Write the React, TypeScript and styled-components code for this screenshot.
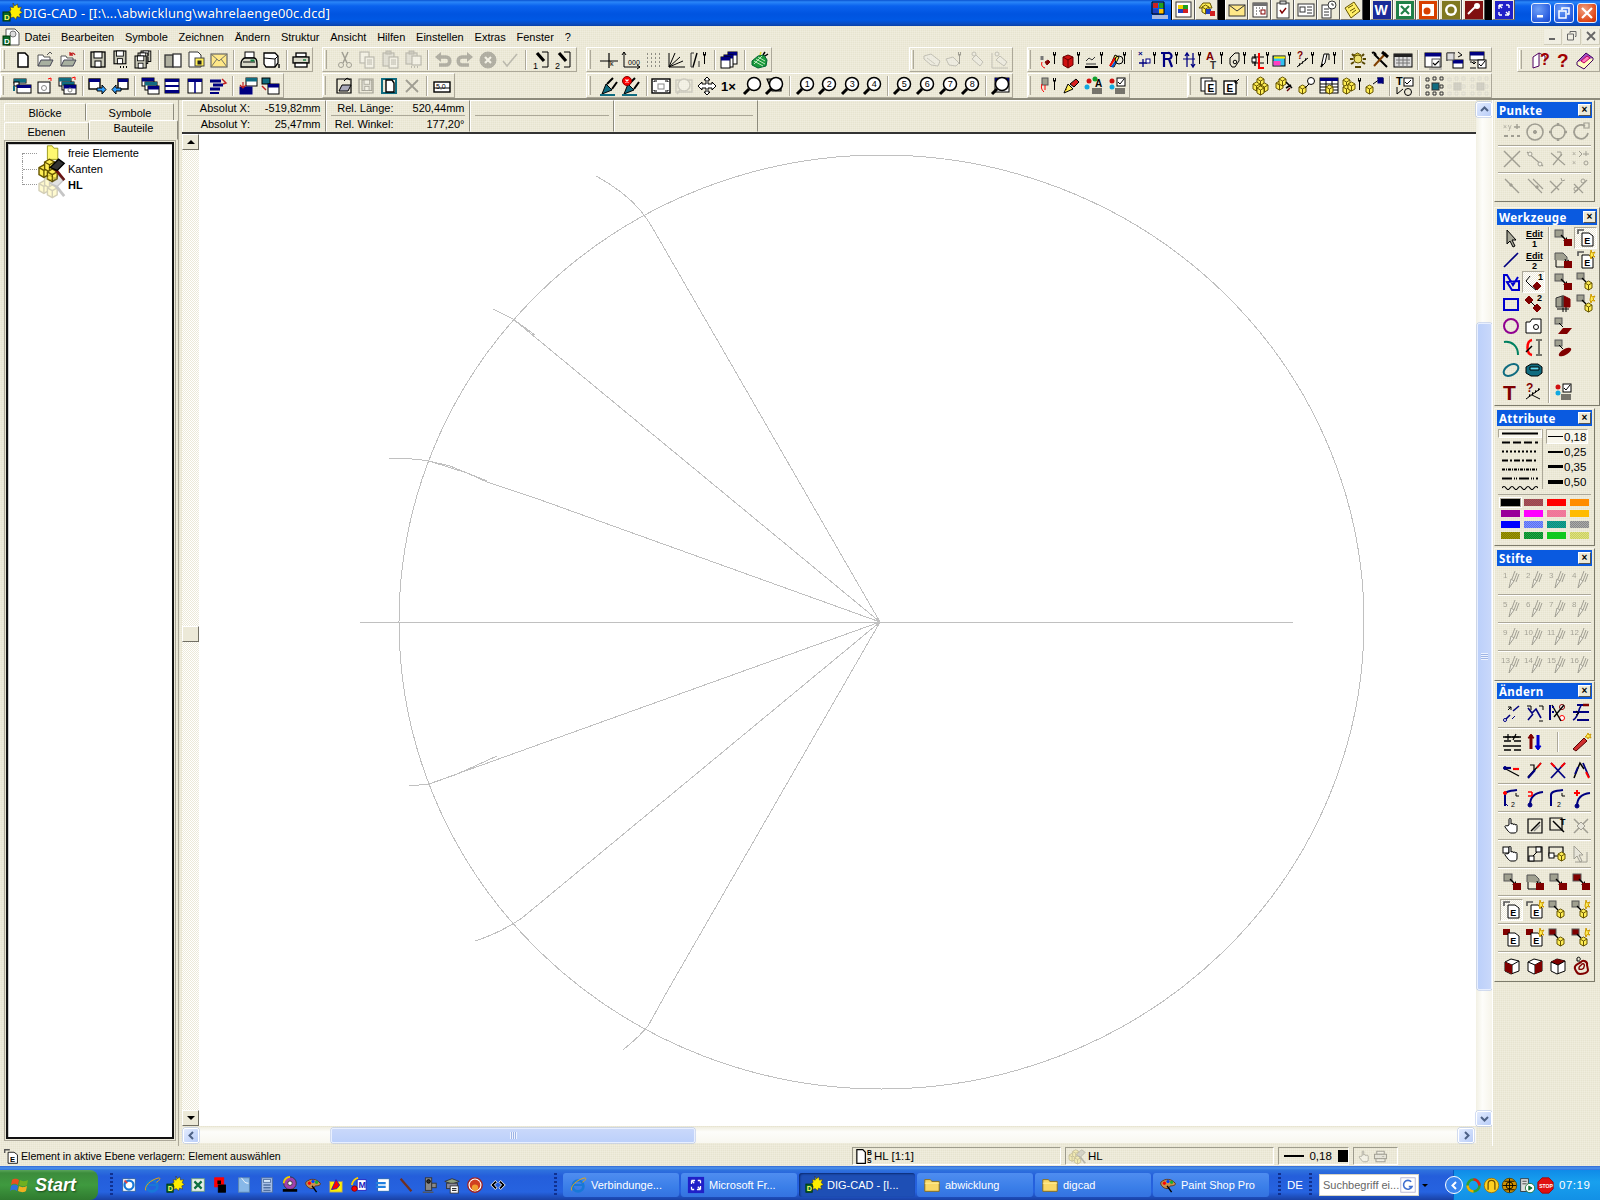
import React from "react";
import styled, { createGlobalStyle, css } from "styled-components";

const Global = createGlobalStyle`
  html, body { margin: 0; padding: 0; background: #ece9d8; overflow: hidden; }
  * { box-sizing: border-box; }
`;

const FONT = `"Liberation Sans", Arial, sans-serif`;
const dither = css`
  background-color: #ece9d8;
  background-image: conic-gradient(#e7e4d0 25%, transparent 0 50%, #f0edde 0 75%, transparent 0);
  background-size: 2px 2px;
`;

/* ---------- icon primitives ---------- */
const Y = "#ffee55", N = "#000080", R = "#ff0000", M = "#800000", B = "#0000d0", T = "#106c80", GR = "#a0a090";
const p = (d: string, s = "#000", f = "none", w = 1) => <path d={d} stroke={s} fill={f} strokeWidth={w} />;
const r = (x: number, y: number, w: number, h: number, f = "#fff", s = "#000", sw = 1) => (
  <rect x={x} y={y} width={w} height={h} fill={f} stroke={s} strokeWidth={sw} />
);
const c = (x: number, y: number, rad: number, f = "none", s = "#000", w = 1) => (
  <circle cx={x} cy={y} r={rad} fill={f} stroke={s} strokeWidth={w} />
);
const t = (v: string, x: number, y: number, size = 8, fill = "#000", bold = false) => (
  <text x={x} y={y} fontSize={size} fill={fill} fontWeight={bold ? 700 : 400} fontFamily="'Liberation Sans',sans-serif">{v}</text>
);
const wr = (dx = 0) => (
  <g transform={`translate(${dx} 0)`}>
    <path d="M14 2h1v2h1V2h1v3l-1 1v8h-1V6l-1-1z" fill="#000" />
  </g>
);
const cb = (x: number, y: number, f = Y, s = "#665500") => (
  <g transform={`translate(${x} ${y})`}>
    {p("M0 2 3.5 0 7 2V7L3.5 9 0 7z", s, f)}
    {p("M0 2 3.5 4 7 2M3.5 4V9", s)}
  </g>
);
const cubes = () => (<>{cb(6, 1)}{cb(2, 6)}{cb(10, 7)}{cb(6, 10)}</>);
const win = (x: number, y: number, w: number, h: number, bar = N) => (
  <g>{r(x, y, w, h, "#fff", "#000")}<rect x={x} y={y} width={w} height={3.5} fill={bar} /></g>
);
const mv = (from = GR, to = M) => (
  <>
    <rect x={2} y={2} width={8} height={7} fill={from} stroke="#555" />
    {p("M8 7 13 12", "#000", "none", 1.4)}{p("M10.5 12.5h3v-3", "#000")}
    <rect x={11} y={11} width={8} height={7} fill={to} />
  </>
);
const eDoc = (from = "none", star = false) => (
  <>
    {from === "none"
      ? p("M2 6V2h6", "#555", "none", 1.6)
      : <rect x={1} y={1} width={7} height={6} fill={from} />}
    {p("M6 5h7l4 3v10H6z", "#000", "#fff")}
    {t("E", 8.2, 16, 9, "#000", true)}
    {star && p("M15 0l1 3 3-1-2 3 2 2-3-.5-1 2.5-1-3z", "#cc9900", Y)}
  </>
);
const cubeMv = (from = GR, star = false) => (
  <>
    <rect x={1} y={1} width={7} height={6} fill={from} stroke="#555" />
    {p("M6 6l4 4", "#000", "none", 1.3)}
    {cb(9, 9)}
    {star && p("M15 0l1 3 3-1-2 3 2 2-3-.5-1 2.5-1-3z", "#cc9900", Y)}
  </>
);
const floppy = (x: number, y: number, s: number) => (
  <g transform={`translate(${x} ${y}) scale(${s})`}>
    {r(0, 0, 14, 15, "#c8c8b8", "#000", 1.3)}{r(3, 0, 8, 6, "#fff", "#000")}{r(4, 9, 6, 6, "#fff", "#000")}
  </g>
);
const hand = () => (
  <>
    {p("M7 9V3.5a1 1 0 0 1 2 0V8l1-.5c1 0 1 .5 1 1l1-.5c1 0 1 .5 1 1l1-.5c1 0 1 .5 1 1.5v4c0 2-1 3-3 3H9c-1 0-2-1-3-2l-3-4c-.5-1 1-2 2-1z", "#000", "#fff")}
  </>
);
const mag = (n?: string) => (
  <>
    {p("M7 13 2 18", "#000", "none", 3)}
    {c(12, 8, 6.5, "#fff", "#000", 1.5)}
    {n && t(n, 9.7, 11.3, 9)}
  </>
);
const logo = () => (
  <>
    {p("M11 0l1.5 3 3-2 .5 3.5 3.5-.5-1.5 3.5 2.5 2-3 1.5 1 3.5-3.5-1-1 3-2.5-2.5-3 1 .5-4-3-2 3-2-1-3 3.5.5z", "#333", "#ffee00", 0.6)}
    {r(1, 9, 7, 9, "#0a6a2a", "#003300")}
    {t("D", 2, 17, 8, "#ffff66", true)}
  </>
);
const folder = () => (
  <>
    {p("M2 6V4h6l2 2h8v11H2z", "#8a6a10", "#f8d868")}
    {p("M2 8h16", "#fff0a0")}
  </>
);
const pal = () => (
  <>
    {p("M2 7c5-5 12-4 16 1 1 2-2 3-5 3-2 0-1 3-4 3C5 14 1 10 2 7z", "#5a3010", "#c89050")}
    {c(6, 8, 1.4, R, R)}{c(10, 6, 1.4, "#0040ff", "#0040ff")}{c(14, 7, 1.4, "#10b030", "#10b030")}
    {p("M9 11l5 7", "#000", "none", 1.6)}
  </>
);
const ie = () => (
  <>
    {c(10, 11, 6, "none", "#1878d8", 3)}
    {p("M5 10h10", "#1878d8", "none", 2.4)}
    {p("M3 16C1 12 8 4 18 2 20 3 17 6 15 7", "#f0a800", "none", 1)}
  </>
);
const fp = () => (
  <>
    <rect x={1} y={1} width={18} height={18} fill="#2020c8" />
    {p("M5 5l3 3M5 5v4M5 5h4M15 15l-3-3M15 15v-4M15 15h-4M15 5h-3M15 5v3M5 15h3M5 15v-3", "#fff", "none", 1.4)}
  </>
);
const dashed = () => p("M3 3h14v14H3z", "#000", "none", 1.2);

const ICONS: Record<string, React.ReactNode> = {
  doc: (<>{p("M3 2h9l4 4v12H3z", "#555", "#fff")}{c(10, 7, 3, "#ddd", "#777")}{r(0, 9, 7, 9, "#0a6a2a", "#003300")}{t("D", 1, 17, 8, "#fff", true)}</>),
  logo: logo(), folder: folder(), pal: pal(), ie: ie(), fp: fp(),
  new: p("M5 3h7l3 3v11H5z", "#000", "#fff", 1.5),
  docbs: (<>{p("M1 2h7l3 3v13H1z", "#000", "#fff", 1.4)}{t("B", 13, 8, 8, "#000", true)}{t("S", 13, 18, 8, "#000", true)}</>),
  open: (<>{p("M3 16V5h5l1 2h6v3", "#555", "#fff")}{p("M3 16 6 10h12l-3 6z", "#445", "#a8b0a0")}{p("M12 5l3-3 2 2", "#555")}</>),
  openr: (<>{p("M3 16V6h5l1 2h6v2", "#555", "#fff")}{p("M3 16 6 10h12l-3 6z", "#445", "#a8b0a0")}{p("M12 5c2-3 4-2 5 0M12 2v3h3", "#c02020", "none", 1.3)}</>),
  save: floppy(3, 2, 1),
  savem: (<>{floppy(3, 1, .85)}{p("M9 17h1M12 17h1M15 17h1", "#000", "none", 2)}</>),
  saveall: (<>{floppy(8, 1, .7)}{floppy(5, 3, .7)}{floppy(2, 6, .8)}</>),
  book: (<>{r(2, 5, 8, 12, "#b0b0a0", "#333", 1.3)}{r(10, 4, 8, 13, "#fff", "#333", 1.3)}</>),
  ydoc: (<>{p("M3 2h9l3 3v12H3z", "#333", "#fff")}{r(9, 8, 9, 8, Y, "#444")}{r(12, 11, 3, 3, "#222", "#222")}</>),
  mail: (<>{r(2, 4, 16, 13, "#ffe888", "#666", 1.2)}{p("M2 4l8 7 8-7M2 17l6-8M18 17l-6-8", "#776")}</>),
  print: (<>{r(6, 2, 9, 6, "#fff")}{p("M2 14c0-3 2-6 4-6h9c2 0 3 3 3 6v3H2z", "#000", "#d8d8c8", 1.3)}{p("M4 12h12", "#000")}{r(12, 10, 3, 1, "#108040", "#108040")}</>),
  plot: (<>{p("M3 3h11l3 3v7l-3 4H5l-2-3z", "#000", "#fff", 1.3)}{p("M3 8l11 1 3-3M14 9v8", "#000")}{p("M18 14v4", "#000", "none", 1.4)}</>),
  print2: (<>{r(5, 3, 10, 4, "#fff", "#000", 1.3)}{r(2, 7, 16, 6, "#d8d8c8", "#000", 1.3)}{r(4, 13, 12, 4, "#fff", "#000", 1.3)}{p("M12 10h3", "#108040", "none", 1.4)}</>),
  cut: (<>{p("M7 2l5 11M13 2 8 13", "#000", "none", 1.5)}{c(6, 15, 2.5)}{c(14, 15, 2.5)}</>),
  copy: (<>{r(3, 2, 9, 11, "#fff", "#555", 1.2)}{r(8, 7, 9, 11, "#fff", "#555", 1.2)}{p("M10 10h5M10 12h5M10 14h5", "#555")}</>),
  paste: (<>{r(3, 3, 11, 13, "#ccb", "#555", 1.2)}{r(6, 1, 5, 3, "#888", "#555")}{r(9, 7, 9, 11, "#fff", "#555", 1.2)}{p("M11 10h5M11 12h5M11 14h5", "#555")}</>),
  pastem: (<>{r(3, 3, 11, 11, "#ccb", "#555", 1.2)}{r(6, 1, 5, 3, "#888", "#555")}{r(9, 6, 9, 9, "#fff", "#555", 1.2)}{p("M8 17h1M11 17h1M14 17h1", "#555", "none", 2)}</>),
  undo: (<>{p("M7 7h6c5 0 5 8 0 8H6", "#333", "none", 3.6)}<path d="M8 2 2 7l6 5z" fill="#333" /></>),
  redo: (<>{p("M13 7H7c-5 0-5 8 0 8h7", "#333", "none", 3.6)}<path d="M12 2l6 5-6 5z" fill="#333" /></>),
  cancel: (<>{c(10, 10, 8, "#333", "#333")}{p("M7 7l6 6M13 7l-6 6", "#fff", "none", 2.2)}</>),
  check: p("M3 11l4 5L17 4", "#555", "none", 1.6),
  pin1: (<>{p("M11 2h6v15h-6", "#000")}{p("M6 3l7 8", "#000", "none", 3.2)}{t("1", 2, 19, 9)}</>),
  pin2: (<>{p("M11 2h6v15h-6", "#000")}{p("M6 3l7 8", "#000", "none", 3.2)}{t("2", 2, 19, 9)}</>),
  snap: (<>{p("M1 11h18M10 3v15", "#000", "none", 1.2)}{t("k", 11, 16, 7)}</>),
  axes: (<>{p("M3 2v15h16M3 2 1 5M3 2l2 3M19 17l-3-2M19 17l-3 2", "#000")}{t("0", 7, 15, 7)}{t("0", 11, 15, 7)}{t("0", 15, 15, 7)}</>),
  grid: (<path d="M3 4h1M7 4h1M11 4h1M15 4h1M3 8h1M7 8h1M11 8h1M15 8h1M3 12h1M7 12h1M11 12h1M15 12h1M3 16h1M7 16h1M11 16h1M15 16h1" stroke="#333" />),
  rays: p("M2 17h16M2 17l14-6M2 17l11-10M2 17l6-14M2 3v14", "#000"),
  slash: (<>{p("M8 3 4 17", "#000", "none", 1.4)}{p("M2 3v14M2 3h3M2 17h3M10 11v6", "#333")}{wr(0)}</>),
  wins: (<>{win(9, 2, 9, 12)}{win(5, 5, 9, 12)}{win(2, 7, 9, 11)}</>),
  bug: (<>{p("M3 11 9 6l6-1 3 5-1 6-8 2-6-3z", "#063", "#1a9a3a")}{p("M5 11l9 5M7 9l9 5M9 7l7 4M5 14l8-8", "#bfe8c0")}{p("M14 5l2-3M16 6l3-2", "#000", "none", 1.4)}{p("M11 5l1-3", "#dd2", "none", 1.4)}</>),
  h1: (<>{p("M2 6l7-2 9 7-2 5-7-1-7-6z", "#666", "#eee")}{p("M5 8l8 6", "#888")}</>),
  h2: (<>{p("M2 9l7-2 6 6-3 3-7-1z", "#666", "#eee")}{wr(0)}</>),
  h3: (<>{p("M5 9 9 5l7 7-3 4z", "#666", "#eee")}{c(7, 4, 2, "#eee", "#666")}</>),
  h4: (<>{p("M2 3v15h16", "#666")}{p("M6 10 10 6l7 6-3 4z", "#666", "#eee")}{c(7, 4, 2, "#eee", "#666")}</>),
  w1: (<>{p("M3 6v4", "#777", "none", 3)}{p("M6 12l3-2 2 2-3 3z", "#800000", M)}{p("M3 12c-1 3 0 5 3 6", R)}{wr(0)}</>),
  w2: (<>{p("M2 7l5-2 5 2v8l-5 3-5-3z", "#600", "#d01010")}{p("M2 7l5 3 5-3M7 10v8", "#600")}{wr(2)}</>),
  w3: (<>{p("M2 11l3-3 3 2 3-3M2 14h10", "#333")}{p("M1 17h13", "#000", "none", 2)}{wr(2)}</>),
  w4: (<>{p("M3 16 8 5l4 2-5 10z", "#000", Y)}{p("M3 16 8 8", R, "none", 2)}{p("M5 17l4-6", "#0050e0", "none", 2)}{c(12, 10, 4, "none", "#000")}{wr(2)}</>),
  w5: (<>{t("×", 1, 6, 8, N, true)}{p("M6 9v8M2 13h8", N, "none", 1.3)}{r(9, 9, 4, 4, "#fff", N)}{wr(2)}</>),
  w6: (<>{p("M2 3h7a3 3 0 0 1 1 6l3 8M5 3v14M5 9h5", N, "none", 2.2)}{wr(2)}</>),
  w7: (<>{p("M5 3v14M3 6l2-3 2 3M11 3v14M9 14l2 3 2-3", N, "none", 1.3)}{p("M1 9h12", N)}{wr(2)}</>),
  w8: (<>{t("A", 2, 10, 11, M, true)}{t("T", 6, 19, 10, "#333", true)}{wr(2)}</>),
  w9: (<>{p("M3 8 8 3h4v8l-4 6H5l-2-3z", "#000")}{c(8, 12, 1.8)}{wr(2)}</>),
  w10: (<>{p("M2 7h12M2 13h12", "#000")}{p("M5 4v12", "#000", "none", 1.4)}{r(2, 8, 4, 4, "#fff")}{p("M9 3v15h5", R, "none", 2)}{wr(2)}</>),
  w11: (<>{r(1, 6, 12, 10, "#30c0f0", "#000")}<rect x={1.5} y={11} width={7} height={4.5} fill="#ff40c0" /><rect x={2} y={6.5} width={11} height={2} fill="#ffee00" />{wr(2)}</>),
  w12: (<>{t("?", 2, 9, 10, M, true)}{p("M2 17 13 8", "#000")}{p("M4 16l1-3M7 14l1-3M10 11l1-3", "#000")}{wr(2)}</>),
  w13: (<>{p("M4 17 7 4h3l-2 9z", "#000", "#fff")}{p("M10 4h2v6", "#000")}{p("M6 14l-2 3", "#000", "none", 1.6)}{wr(2)}</>),
  gear: (<>{cb(6, 3, "#e0d040")}{p("M2 9h3M15 9h3M4 4l2 2M16 4l-2 2M3 14l3-2M17 14l-3-2M7 17h6", "#554400", "none", 2)}{c(10, 9, 4, "#ece070", "#665500")}</>),
  tools: (<>{p("M4 4l13 13", "#000", "none", 2)}{p("M16 3 4 16", "#804000", "none", 2)}{p("M12 2l6 5", "#000", "none", 3)}{p("M2 3c2-1 3 0 4 2", "#000", "none", 2)}</>),
  bar: (<>{r(1, 4, 18, 13, "#ddd")}<rect x={1} y={4} width={18} height={3} fill="#222" />{p("M3 10h14M3 13h14M6 7v10M10 7v10M14 7v10", "#777")}</>),
  wc: (<>{win(2, 3, 16, 14)}{r(9, 9, 8, 8, "#fff", "#555")}{p("M10 13l2 2 4-4", "#000", "none", 1.1)}{p("M6 19h13", "#999", "none", 1)}</>),
  wx: (<>{p("M2 3h8M2 3v8", "#000")}{p("M5 7l3 3M13 2l4 3-4 2", "#000")}{win(8, 10, 10, 8)}{r(2, 3, 7, 7, "#ddd", "#555")}</>),
  wy: (<>{win(2, 2, 14, 8)}{p("M4 12l2 2 2-2M6 14v-3", "#000")}{r(10, 10, 8, 8, "#fff")}{p("M11 14l2 2 4-5", "#000")}{p("M2 12h2M2 18h6", "#000")}</>),
  helpq: (<>{p("M3 7l6-4v13l-6 2zM9 3l6 3v5", "#500060", "#fff")}{t("?", 10, 15, 16, "#a00000", true)}</>),
  help: t("?", 5, 17, 19, "#a00000", true),
  bookp: (<>{p("M2 12 11 3l7 5-9 9z", "#400060", "#a050c0")}{p("M2 12v3l7 4 9-9V8", "#400060", "#ffffc0")}{p("M6 11l6-5 3 2-6 5z", "#c00060", "#ff80c0")}</>),
  pg1: (<>{win(2, 3, 12, 4, T)}{r(2, 6, 5, 4, "#fff", "#000")}{r(5, 9, 14, 8, "#fff")}<rect x={5} y={9} width={14} height={3} fill={N} />{p("M2 10v5", T, "none", 2)}</>),
  pg2: (<>{r(4, 6, 12, 11, "#fff")}{c(10, 12, 2.5, "none", "#888")}{p("M14 3l3-1M17 2v3", R)}</>),
  pg3: (<>{win(2, 2, 12, 8, T)}{win(5, 6, 12, 8, T)}{win(7, 9, 12, 9)}{c(13, 14, 2, "none", "#888")}{p("M15 2l3-1M18 1v3", R)}</>),
  ar1: (<>{r(2, 3, 11, 10, "#fff", "#000", 1.4)}<rect x={2} y={3} width={11} height={3} fill={N} />{p("M10 12h5V9l4 4.5-4 4.5v-3h-5z", "#000", "#30a0ff")}</>),
  ar2: (<>{r(8, 3, 10, 10, "#fff", "#000", 1.4)}<rect x={8} y={3} width={10} height={3} fill={N} />{p("M11 12H6V9l-4 4.5 4 4.5v-3h5z", "#000", "#30a0ff")}</>),
  st: (<>{win(2, 2, 12, 8)}{win(5, 6, 12, 8, T)}{win(8, 10, 11, 8)}</>),
  hs: (<>{r(3, 3, 14, 14)}<rect x={3} y={3} width={14} height={3} fill={N} /><rect x={3} y={9} width={14} height={2} fill={N} /><rect x={3} y={14} width={14} height={3} fill={N} /></>),
  vs: (<>{r(3, 3, 14, 14)}<rect x={3} y={3} width={14} height={3} fill={N} />{p("M10 3v14", N, "none", 1.6)}</>),
  lst: (<>{p("M2 5h11M5 9h10M2 13h10", N, "none", 3)}{p("M2 17h9", N, "none", 2)}{p("M14 3l4 4-3 1", "#c02020", "none", 1.4)}</>),
  li1: (<>{win(8, 2, 11, 8, T)}{r(2, 11, 12, 7, N, N)}{p("M2 9l3 3 3-3M5 12V6", "#c02020", "none", 1.2)}</>),
  li2: (<>{r(2, 2, 8, 6, T, "#000")}{p("M2 10l4 4", "#c02020", "none", 1.4)}{win(8, 8, 11, 10)}</>),
  dopen: (<>{dashed()}{p("M5 15 8 9h9l-3 6z", "#000", "#aab")}{p("M10 5l3-3 3 2", "#000")}</>),
  dsave: (<>{dashed()}{floppy(6, 4, .7)}</>),
  dsel: (<>{p("M3 3h14v14H3z", T, "none", 2)}{p("M7 4h6l2 3v9H7z", "#000", "#fff", 1.4)}</>),
  x: p("M4 4l12 12M16 4 4 16", "#000", "none", 1.8),
  scale: (<>{r(2, 6, 16, 10, "#fff", "#000", 1.4)}{p("M2 12h16", "#000")}{t("5,0", 4, 13, 7)}</>),
  pen: (<>{p("M3 18 7 8l6 6-10 4z", "#000", T)}{p("M8 8l6-6M13 13l5-7", "#000", "none", 2)}{p("M1 19h15", T, "none", 2)}</>),
  penx: (<>{p("M3 18 7 8l6 6-10 4z", "#000", T)}{p("M8 8l6-6M13 13l5-7", "#000", "none", 2)}{p("M1 19h15", T, "none", 2)}{c(6, 5, 4.5, R, "#800")}{p("M4.5 3.5l3 3M7.5 3.5l-3 3", "#fff", "none", 1.2)}</>),
  fit: (<>{r(1, 3, 18, 14, "#fff", "#000", 1.4)}{r(7, 8, 6, 5, "#fff", "#888")}{p("M3 6V5h3M14 5h3v1M3 14v1h3M14 15h3v-1", "#000")}</>),
  zoomd: (<>{p("M2 4h16v12H2z", "#888", "none", 1.4)}{c(10, 9, 6, "#fff", "#888", 1.5)}{p("M6 14l-3 4", "#888", "none", 2)}</>),
  pan: (<>{p("M10 1l3 3h-2v4h4V6l4 4-4 4v-2h-4v4h2l-3 3-3-3h2v-4H5v2l-4-4 4-4v2h4V4H7z", "#000", "#fff")}</>),
  one: t("1×", 2, 15, 13, "#000", true),
  mag: mag(),
  magb: (<>{p("M3 3h14v12H8z", "#000", "#a8a898", 1.2)}{mag()}</>),
  zw: (<>{win(5, 2, 14, 14)}{mag()}</>),
  p1: (<>{r(3, 2, 6, 7, GR, "#555")}{p("M6 9v5M3 8c-1 3-1 5 2 8", R)}{wr(0)}</>),
  brush: (<>{p("M3 17l4-9 5 5z", "#000", Y)}{p("M9 8l6-5 3 3-5 5z", "#000", "#d82020")}{p("M4 15l2-2", "#b08000")}</>),
  attr: (<>{c(5, 5, 2.5, "#d01010", "none")}{c(11, 3, 2.5, "#10a030", "none")}{c(3, 11, 2.5, "#10a8e0", "none")}{t("A", 11, 11, 10, "#000", true)}{p("M8 13h10M8 15h10M8 17h10", "#000")}</>),
  attc: (<>{c(5, 5, 2.5, "#d01010", "none")}{c(5, 11, 2.5, "#10a8e0", "none")}{r(10, 2, 8, 8)}{p("M11 6l2 2 4-5", "#000")}{p("M8 13h10M8 15h10M8 17h10", "#000", "none", 1)}</>),
  fe: (<>{r(2, 2, 11, 13)}{r(6, 5, 11, 13)}{t("E", 8.5, 16, 10, "#000", true)}</>),
  fe2: (<>{r(3, 5, 12, 13, "#fff", "#000", 1.3)}{t("E", 5.5, 16, 10, "#000", true)}{p("M18 3l-4 4M14 4v3h3", "#000")}</>),
  cb3: cubes(),
  cbh: (<>{cb(2, 5)}{cb(5, 1)}{p("M12 6l6 6M12 12l5-3", "#000", "none", 1.6)}{p("M13 15l3-3", "#600", "none", 1.4)}</>),
  cbo: (<>{cb(2, 9)}{c(14, 5, 3.5, "#fff")}{p("M8 12l4-4", "#000")}</>),
  cbt: (<>{r(1, 2, 18, 15, "#fff")}<rect x={1} y={2} width={18} height={3} fill={N} />{p("M1 8h18M1 11h18M1 14h18M7 5v12M13 5v12", "#000")}{cb(7, 9)}</>),
  cbw: (<>{cb(1, 2)}{cb(1, 9)}{cb(6, 6)}{wr(2)}</>),
  cbb: (<>{cb(2, 9)}{p("M9 8l7-5M13 2h6v6", "#000")}{r(14, 2, 5, 5, N, N)}</>),
  attT: (<>{t("T", 1, 9, 11, "#000", true)}{r(9, 2, 9, 8)}{p("M10 6l2 2 4-4", "#000")}{p("M2 11v7M2 18l6-5", "#000")}{c(13, 16, 3.5)}</>),
  nodes: (<>{r(7, 7, 7, 7, T, "#333")}{p("M1 2h3v3H1zM8 1h3v3H8zM15 1h3v3h-3zM1 9h3v3H1zM15 9h3v3h-3zM1 16h3v3H1zM8 16h3v3H8zM15 16h3v3h-3z", "#333")}</>),
  nodesg: (<>{r(7, 7, 7, 7, "#999", "#888")}{p("M1 2h3v3H1zM8 1h3v3H8zM15 1h3v3h-3zM1 9h3v3H1zM15 9h3v3h-3zM1 16h3v3H1zM8 16h3v3H8zM15 16h3v3h-3z", "#bbb")}</>),
  /* punkte */
  pxy: (<>{t("×", 1, 7, 7)}{t("y", 6, 7, 7)}{p("M15 2v5M12 5h6", "#000", "none", 1.4)}{p("M2 14h4M9 14h3M15 14h3", "#000", "none", 2)}</>),
  pcc: (<>{c(10, 10, 8, "none", "#000", 1.6)}{c(10, 10, 1.6, "#000")}</>),
  pcd: (<>{c(10, 10, 7, "none", "#000", 1.6)}{p("M10 1v3M10 16v3M1 10h3M16 10h3", "#000", "none", 2.5)}</>),
  pca: (<>{p("M14 4a7 7 0 1 0 3 7", "#000", "none", 1.8)}{p("M13 1h5v5h-5z", "#000", "none", 1.2)}</>),
  pxx: p("M2 2l16 16M18 2 2 18", "#000", "none", 1.5),
  pmid: (<>{p("M2 3l16 14", "#000", "none", 1.2)}{c(5, 5, 2, "#fff")}{c(15, 15, 2, "#fff")}</>),
  ppt: (<>{p("M3 4l14 12M14 5 5 16", "#000", "none", 1.2)}{p("M9 3h4v4", "#000")}</>),
  pxz: (<>{t("×", 1, 7, 7)}{p("M8 2l3 3-3 3", "#000")}{p("M15 2v5M12 5h6", "#000")}{t("×", 1, 16, 7)}{c(15, 14, 2)}</>),
  pl1: (<>{p("M3 3l14 14", "#000", "none", 1.4)}{p("M8 8l2 2", "#000", "none", 3)}</>),
  pl2: (<>{p("M3 3l14 14M8 3l10 10", "#000", "none", 1.2)}{p("M11 10l2 2", "#000", "none", 3)}</>),
  pl3: (<>{p("M3 17 14 6M2 5l9 9", "#000", "none", 1.4)}{p("M13 2l1 3 3-1", "#000")}</>),
  pl4: (<>{p("M3 17 16 4M3 8l9 9", "#000", "none", 1.2)}{c(12, 5, 2)}{c(5, 13, 2)}</>),
  /* werkzeuge */
  arrow: p("M6 2v14l3-3 3 6 2-1-3-6h4z", "#000", "#a8a898"),
  ln: p("M3 17 17 3", N, "none", 1.7),
  poly: p("M3 18V3h3l6 10L17 5M11 18 6 10l12-1v9z", B, "none", 2),
  rc: r(3, 5, 14, 11, "none", B, 2),
  ci: c(10, 10, 7, "none", "#900090", 2),
  ar: p("M3 4c8-1 14 4 14 13", "#008060", "none", 2),
  el: (<ellipse cx={10} cy={10} rx={8} ry={5} transform="rotate(-30 10 10)" fill="none" stroke={T} strokeWidth={2} />),
  tt: t("T", 2, 18, 21, M, true),
  edit1: (<>{t("Edit", 2, 9, 9, "#000", true)}{p("M2 10.5h16", "#000")}{t("1", 8, 19, 9, "#000", true)}</>),
  edit2: (<>{t("Edit", 2, 9, 9, "#000", true)}{p("M2 10.5h16", "#000")}{t("2", 8, 19, 9, "#000", true)}</>),
  node1: (<>{p("M2 9l4-5M2 9l5 5 5 4", "#000")}{t("1", 14, 8, 9, "#000", true)}{p("M13 10l4 4-4 4-4-4z", M, M)}</>),
  node2: (<>{p("M5 2l4 4-4 4-4-4z", M, M)}{t("2", 13, 7, 9, "#000", true)}{p("M13 10l4 4-4 4-4-4z", M, M)}{p("M7 8l4 4", "#000")}</>),
  pocket: (<>{p("M2 6h4l2-3h9v14H2z", "#000", "#fff")}{c(12, 11, 2.5)}</>),
  dim: (<>{p("M8 2c-6 1-6 14 0 15", R, "none", 2.5)}{p("M2 14 8 8", "#000", "none", 1.5)}{p("M12 2h6M12 17h6M15 3v13", "#000")}</>),
  nut: (<>{p("M2 7l5-3h7l4 3v6l-4 3H7l-5-3z", "#000", T)}{p("M6 7h9v3H6z", "#000", "#60d8f0")}</>),
  qd: (<>{t("?", 2, 10, 12, M, true)}{p("M2 17 16 7", "#000")}{p("M5 15l1-3M8 13l1-3M11 11l1-3M14 9l1-3M8 13l8 4", "#000")}</>),
  mv: mv(), mvr: mv(M, M),
  mvc: (<>{p("M2 10V3h8l4 4v4", "#555", GR)}{p("M3 10v7h8", "#000", "none", 1)}{p("M12 9l1 3 3-2", "#000")}<rect x={11} y={11} width={8} height={7} fill={M} /></>),
  split: (<>{p("M3 4l6-2v11H3z", "#333", GR)}{p("M11 2l6 3v8h-6z", M, M)}{p("M10 1v17M4 15h12M13 13v5", "#000")}</>),
  para1: (<>{r(2, 2, 7, 6, GR, "#555")}{p("M6 7l4 4", "#000")}<path d="M5 18 10 12h9l-5 6z" fill={M} /></>),
  para2: (<>{r(2, 2, 7, 6, GR, "#555")}{p("M6 7l4 4", "#000")}<ellipse cx={12} cy={14} rx={7} ry={3} fill={M} transform="rotate(-30 12 14)" /></>),
  edoc: eDoc(), estar: eDoc("none", true), cubem: cubeMv(), cubes: cubeMv(GR, true),
  edocr: eDoc(M), estarr: eDoc(M, true), cubemr: cubeMv(M), cubesr: cubeMv(M, true),
  /* aendern */
  a1: (<>{p("M3 17 8 12", N, "none", 1.6)}{p("M11 8 17 3", N, "none", 1.6)}{p("M6 7 9 4M6 4h3v3", "#000")}{c(3, 17, 1.5, "#fff", N)}{p("M13 13l-3 3", N)}</>),
  a2: (<>{p("M3 5l4 5 4-4 5 9M3 17l5-6", N, "none", 1.6)}{p("M2 3h4v4M14 3h4v4M14 18h4", "#000")}</>),
  a3: (<>{c(14, 4, 2.5, "#fff", M)}{c(14, 15, 2.5, "#fff", R)}{p("M4 2l9 16M16 2 6 14", "#000", "none", 1.4)}{p("M2 2v15M5 3v2M5 8v2", N, "none", 2)}</>),
  a4: (<>{p("M6 2h12M2 9h16M6 17h12", N, "none", 1.8)}{p("M2 17C8 14 7 6 10 3", N, "none", 1.6)}{p("M12 2h6", M, "none", 2.5)}{p("M5 8l3 2-3 2", "#000")}</>),
  eq: (<>{p("M1 5h18M1 14h18", "#000", "none", 1.6)}{p("M2 9h7M2 18h7M12 9h7M12 18h7", "#000", "none", 1.6)}{p("M6 2v6M3 5h6M14 2l-3 6M10 5h7", "#000", "none", 1.2)}</>),
  ud: (<>{p("M6 3v14", M, "none", 3)}{p("M3 6 6 2l3 4z", M, M)}{p("M13 3v14", B, "none", 3)}{p("M10 14l3 4 3-4z", B, B)}</>),
  fire: (<>{p("M2 17 13 6l3 3L5 19z", "#500", "#d03030")}{p("M15 5l3-3", "#333")}{p("M17 1l1 2 2-1-1 2 1 2-2-1-1 2-1-2-2 0 2-2z", "#cc9900", Y)}</>),
  t1: (<>{p("M2 8l15 8", "#000", "none", 1.4)}{p("M2 8h7", N, "none", 2.2)}{p("M11 9h6", R, "none", 2.2)}{c(3, 8, 1.5, N, N)}</>),
  t2: (<>{p("M3 17 16 3", "#000", "none", 1.4)}{p("M3 18 10 10", N, "none", 2)}{p("M12 8l4-5", R, "none", 1.6)}{p("M5 5h4v5", "#000", "none", 1.2)}</>),
  t3: (<>{p("M3 3l14 15", N, "none", 1.8)}{p("M17 3 3 18", N, "none", 1.8)}{p("M3 3l4 4M17 3l-4 4", R, "none", 1.8)}</>),
  t4: (<>{p("M3 18 9 3l4 6", "#000", "none", 1.5)}{p("M12 3l6 14", N, "none", 1.8)}{p("M15 12l3 6", R, "none", 2)}{p("M7 7l-3 7", N, "none", 1.8)}</>),
  f1: (<>{p("M3 18V7c0-3 3-4 12-5", N, "none", 2)}{p("M3 15l3 3", N)}{t("2", 9, 19, 7)}{p("M14 5v3h3", "#000")}{c(3, 5, 1.5, R, R)}</>),
  f2: (<>{p("M5 17c0-8 4-12 13-13", N, "none", 2)}{c(5, 17, 2, N, N)}{p("M3 4h4M3 8h4M7 4v4", R, "none", 1.6)}</>),
  f3: (<>{p("M3 18V7c0-3 3-4 12-5", N, "none", 2)}{t("2", 9, 19, 7)}{p("M14 5v3h3", "#000")}</>),
  f4: (<>{p("M6 18c0-8 4-12 13-13", N, "none", 2)}{c(6, 18, 2, N, N)}{p("M3 5h6M6 2v6", R, "none", 2)}</>),
  hd: hand(),
  dl: (<>{p("M3 3h14v14H3z", "#000", "none", 1.2)}{p("M6 15 15 6", "#000", "none", 1.5)}{p("M9 15l6-6", "#888", "none", 1.5)}</>),
  dm: (<>{p("M2 2h12v12H2z", "#000", "none", 1.2)}{p("M5 5l11 11", "#000", "none", 1.5)}{t("T", 12, 9, 9, "#000", true)}</>),
  dx: (<>{p("M3 3l14 14M17 3 3 17", "#000", "none", 1.5)}{p("M6 10l4-4 4 4-4 4z", "#000", "#ddd")}</>),
  hl: (<>{r(1, 3, 6, 6)}{hand()}</>),
  dn: (<>{p("M3 3h14v14H3z", "#000", "none", 1.2)}{r(11, 3, 5, 5)}{p("M7 13l5-5", "#000")}{r(4, 12, 5, 5)}</>),
  dc: (<>{p("M1 3h14v9H1z", "#000", "none", 1.2)}{cb(10, 8)}{r(1, 9, 5, 5)}</>),
  da: (<>{p("M3 2v13l3-3 3 6 2-1-3-6h4z", "#000", "#ddd")}{p("M4 18h12V8", "#000")}</>),
  cu1: (<>{p("M3 6l6-3 8 2v10l-8 3-6-3z", "#000", "#fff")}{p("M3 6l7 3 7-4M10 9v9", "#000")}<path d="M3 6l7 3v9l-7-3z" fill={M} /></>),
  cu2: (<>{p("M3 6l6-3 8 2v10l-8 3-6-3z", "#000", "#fff")}{p("M3 6l7 3 7-4M10 9v9", "#000")}<path d="M10 9l7-4v10l-7 3z" fill={M} /></>),
  cu3: (<>{p("M3 6l6-3 8 2v10l-8 3-6-3z", "#000", "#fff")}<path d="M3 6l6-3 8 2-7 4z" fill={M} />{p("M3 6l7 3 7-4M10 9v9", "#000")}</>),
  spi: (<>{p("M5 15c-4-6 3-7 5-9 2-3 7 0 6 3l1 5c0 3-5 4-8 4-2 0-3-1-4-3z", M, "none", 2)}{p("M8 13c-1-3 2-3 3-5 2-1 3 1 2 3 0 2-3 3-5 2z", M, "none", 1.4)}{p("M6 2c2-2 4 0 3 2M6 2v3h3", "#000")}</>),
  /* taskbar */
  ql1: (<>{r(3, 3, 14, 14, "#fff", "#3060a0")}{c(10, 10, 5, "none", "#1878d8", 2.5)}{p("M5 5l3 3", "#e04040", "none", 2)}</>),
  xl: (<>{r(3, 3, 14, 14, "#e8f0e8", "#70a080")}{p("M6 6l8 8M14 6l-8 8", "#107040", "none", 2.5)}</>),
  pl: (<>{r(3, 2, 10, 10, R, R)}<rect x={6} y={5} width={4} height={4} fill="#000" />{r(7, 10, 8, 8, "#000", "#000")}</>),
  blue: (<>{r(4, 2, 12, 16, "#88b8e8", "#6088b0")}{p("M7 2c3 3 3 6 8 6", "#fff")}</>),
  calc: (<>{r(4, 2, 12, 16, "#a8c0e8", "#5070a0")}{r(6, 4, 8, 3, "#e0f0ff", "#5070a0")}{p("M6 10h8M6 13h8M6 16h8", "#5070a0", "none", 1.5)}</>),
  cd: (<>{c(10, 8, 7, "#a040b0", "#333")}{c(10, 8, 2.5, "#fff", "#333")}{p("M3 8a7 7 0 0 1 7-7", "#f0d000", "none", 2)}{p("M2 16h16", "#000", "none", 3)}</>),
  ynote: (<>{r(3, 6, 14, 12, "#ffee00", "#888")}{p("M5 15 10 4l4 6-3 4z", "#2020c0", R)}</>),
  mq: (<>{p("M8 4h10v12H8z", "#2020c0", "#fff")}{t("M", 9.5, 13, 10, "#2020c0", true)}{c(5, 14, 3, R, "#800")}{p("M2 10c1-5 3-7 7-8", "#ffcc00", "none", 2)}</>),
  bluebox: (<>{r(4, 3, 13, 14, "#fff", "#2060b0")}{p("M2 8h11M2 12h11", "#2080e0", "none", 2.5)}</>),
  stick: p("M4 3 16 17", "#703020", "none", 2.5),
  proj: (<>{r(6, 2, 7, 14, "#888", "#333")}{c(9.5, 6, 2, "#333")}{r(13, 8, 5, 5, "#888", "#333")}{p("M3 18h12", "#555", "none", 1.5)}</>),
  printg: (<>{p("M2 6l8-3 8 3-8 3z", "#333", "#90a080")}{r(4, 8, 12, 6, "#889", "#333")}{r(8, 11, 9, 8, "#fff", "#333")}{p("M10 14h5M10 16h5", "#000")}</>),
  ball: (<>{c(10, 10, 8, "#fff", "#a02020", 1.5)}{c(10, 10, 6, "#d04020", "none")}{c(10, 13, 3.5, "#f0a030", "none")}</>),
  arrows: (<>{p("M2 10l5-5 2 2-3 3 3 3-2 2zM18 10l-5-5-2 2 3 3-3 3 2 2z", "#fff", "#000")}</>),
  tr1: (<>{c(10, 10, 7, "none", "#30a030", 3)}{p("M10 3a7 7 0 0 1 7 7", "#e02020", "none", 3)}{p("M3 10a7 7 0 0 0 7 7", "#f0b000", "none", 3)}</>),
  tr2: (<>{c(10, 10, 8.5, "#ffd020", "#a07000")}{p("M6 15V8a4 4 0 0 1 8 0v7", "#705000", "none", 1.5)}</>),
  tr3: (<>{c(10, 10, 8.5, "#d09000", "#504000")}{p("M2 10h16M10 2v16M4 5h12M4 15h12", "#000", "none", 1)}{c(10, 10, 4)}</>),
  tr4: (<>{r(2, 2, 9, 15, "#ddd", "#333")}{p("M4 5h5M4 8h5", "#333")}{c(13, 13, 5.5, "#fff", "#107030")}{p("M11.5 10.5l4 2.5-4 2.5z", "#107030", "#107030")}</>),
  stop: (<>{p("M6 1h8l5 5v8l-5 5H6l-5-5V6z", "#a00000", "#e01010")}{t("STOP", 2.5, 12.5, 6, "#fff", true)}</>),
  win1: (<>{[["#d02020", 3, 3], ["#20a020", 9, 3], ["#2040c0", 3, 9], ["#ffc000", 9, 9]].map((v, i) => <rect key={i} x={v[1] as number} y={v[2] as number} width={5} height={5} fill={v[0] as string} />)}{p("M2 2h12v12H2z", "#000", "none", 1)}<rect x={2} y={15} width={16} height={4} fill="#a8b8e0" /></>),
  win2: (<>{r(2, 2, 15, 15, "#fff", "#333")}<rect x={4} y={5} width={5} height={4} fill="#f0d000" /><rect x={9} y={5} width={5} height={4} fill="#20a020" /><rect x={4} y={9} width={5} height={4} fill="#2040c0" /><rect x={9} y={9} width={5} height={4} fill="#d02020" /></>),
  win3: (<>{p("M2 8l4-5h7l2 5z", "#665500", Y)}{cb(5, 5)}<rect x={9} y={9} width={5} height={5} fill="#2040c0" /><rect x={13} y={11} width={5} height={5} fill="#d02020" /></>),
  t_mail: (<>{r(2, 5, 16, 11, "#ffe888", "#333")}{p("M2 5l8 6 8-6", "#333")}</>),
  t_cal: (<>{r(3, 3, 14, 14, "#fff", "#333")}<rect x={3} y={3} width={14} height={3} fill="#707070" />{p("M6 8h1M9 8h1M12 8h1M6 11h1M9 11h1M6 14h1", "#333")}{r(11, 10, 4, 4, "#fff", M)}</>),
  t_task: (<>{r(4, 3, 12, 15, "#fff", "#333")}{r(7, 1, 6, 3, "#ccc", "#333")}{p("M7 10l2 3 4-5", M, "none", 1.4)}</>),
  t_card: (<>{r(2, 4, 16, 12, "#fff", "#333")}{r(4, 7, 5, 5, "#fff", "#333")}{p("M11 7h5M11 10h5M11 13h5", "#333")}</>),
  t_jour: (<>{r(3, 5, 9, 13, "#fff", "#333")}{c(13, 5, 4, "#fff", "#333")}{p("M13 3v2h2M5 9h5M5 12h5M5 15h5", "#333")}</>),
  t_note: (<>{p("M3 8 12 2l6 9-9 7z", "#665500", "#ffee66")}{p("M6 8l5-3M8 11l5-3M10 13l4-3", "#665500")}</>),
  o_w: (<>{r(1, 1, 18, 18, "#1a2a98", "none")}{t("W", 2.5, 15, 14, "#fff", true)}</>),
  o_x: (<>{r(1, 1, 18, 18, "#208048", "none")}{r(4, 4, 12, 12, "#fff", "none")}{p("M6 6l8 8M14 6l-8 8", "#208048", "none", 2.2)}</>),
  o_p: (<>{r(1, 1, 18, 18, "#d84000", "none")}{r(4, 4, 12, 12, "#fff", "none")}{c(9, 11, 3.5, "#d84000", "none")}</>),
  o_o: (<>{r(1, 1, 18, 18, "#807820", "none")}{c(10, 10, 6, "#fff", "none")}{c(10, 10, 3.5, "#807820", "none")}</>),
  o_a: (<>{r(1, 1, 18, 18, "#801010", "none")}{p("M4 14 11 7", "#fff", "none", 2)}{c(13, 6, 3, "#fff", "none")}</>),
  flag: (<><path d="M2 5c3-2 5-1 7 0L8 10c-2-1-4-2-7 0z" fill="#e85020" /><path d="M10 5c2 1 4 2 8 0l-1 5c-3 2-5 1-8 0z" fill="#70b020" /><path d="M1 11c3-2 5-1 7 0l-1 5c-2-1-4-2-7 0z" fill="#3070e0" /><path d="M9 11c2 1 4 2 8 0l-1 5c-3 2-5 1-8 0z" fill="#f0b020" /></>),
  kanten: (<>{cb(0, 7)}{cb(4, 3)}{cb(6, 10)}{p("M10 8l8 10", "#701010", "none", 2)}{p("M8 9l6-6 4 3-5 5z", "#000", "#333")}</>),
  hl2: (<><g opacity=".28">{cb(0, 7)}{cb(4, 3)}{cb(6, 10)}{p("M10 8l8 10", "#333", "none", 2)}{p("M8 9l6-6 4 3-5 5z", "#333", "#999")}</g></>),
  tfolder: (<>{p("M3 1h6l2 3h5v14H3z", "#888800", "#fff870")}</>),
  G: (<>{r(1, 1, 18, 18, "#fff", "#aac")}{p("M14 6a5.5 5.5 0 1 0 1 6h-4", "#4070d0", "none", 2)}</>),
};
for (let i = 1; i <= 8; i++) ICONS[`z${i}`] = mag(String(i));
for (let i = 1; i <= 16; i++)
  ICONS[`s${i}`] = (
    <>
      {t(String(i), i > 9 ? -1 : 1, 8, 8, "#000")}
      {p("M7 18l2-9 3 2z", "#000", "#fff")}
      {p("M10 9l3-8M12 11l3-8M14 12l3-8", "#000", "none", 1)}
    </>
  );

/* ---------- icon components ---------- */
const IconSvg = styled.svg<{ $s: number; $off?: boolean }>`
  display: block;
  flex: none;
  width: ${(q) => q.$s}px;
  height: ${(q) => q.$s}px;
  overflow: visible;
  ${(q) => q.$off && "filter: grayscale(1) opacity(.32);"}
`;
const Icon = ({ n, s = 20, off }: { n: string; s?: number; off?: boolean }) => (
  <IconSvg $s={s} $off={off} viewBox="0 0 20 20" aria-hidden>{ICONS[n]}</IconSvg>
);

/* ---------- title bar ---------- */
const Shell = styled.div`
  width: 1600px; height: 1200px; display: flex; flex-direction: column; overflow: hidden;
  font-family: ${FONT}; font-size: 11px; color: #000;
  ${dither}
`;
const TitleBar = styled.div`
  height: 26px; flex: none; display: flex; align-items: flex-start; padding-left: 2px;
  background: linear-gradient(180deg, #0a52d0 0, #2a86f8 2px, #0a62ee 6px, #0054e0 14px, #0058e4 20px, #0a4cc0 24px, #0840a8 26px);
`;
const AppLogo = styled.div`margin-top: 3px; margin-right: 1px;`;
const TitleText = styled.div`
  color: #fff; font-family: "Noto Sans", sans-serif; font-size: 13px; line-height: 26px; letter-spacing: .12px;
  text-shadow: 1px 0 0 rgba(0,0,40,.3); white-space: nowrap;
`;
const Quick = styled.div`margin-left: auto; display: flex; align-items: flex-start; height: 20px;`;
const QuickSquare = styled.div`width: 22px; height: 20px; display: flex; align-items: center; justify-content: center;`;
const QuickBtn = styled.div`
  width: 23px; height: 20px; display: flex; align-items: center; justify-content: center;
  background: #ece9d8; border-right: 1px solid #555; border-bottom: 1px solid #777; border-left: 1px solid #fff;
`;
const QuickGap = styled.div<{ $w: number }>`width: ${(q) => q.$w}px; height: 20px; background: #000;`;
const WinButtons = styled.div`display: flex; gap: 3px; margin: 3px 3px 0 16px;`;
const WinBtn = styled.div<{ $close?: boolean }>`
  width: 20px; height: 20px; border: 1px solid #e8f0ff; border-radius: 3px;
  display: flex; align-items: center; justify-content: center;
  background: ${(q) => q.$close
    ? "radial-gradient(circle at 35% 30%, #f0a080, #e04818 70%, #c02a08)"
    : "radial-gradient(circle at 35% 30%, #6fa0f8, #2a5ee0 70%, #1a48c8)"};
`;

/* ---------- menu ---------- */
const MenuBar = styled.div`
  height: 21px; flex: none; display: flex; align-items: center; padding: 0 0 0 3px; gap: 10.8px;
`;
const MenuIcon = styled.div`margin-right: -9.3px; width: 20px;`;
const MenuItem = styled.span`font-size: 11px; line-height: 20px; white-space: nowrap;`;
const MdiBtns = styled.div`margin-left: auto; display: flex; gap: 1px;`;
const MdiBtn = styled.div`
  width: 18px; height: 16px; color: #666; display: flex; align-items: center; justify-content: center;
  border-right: 1px solid #cfccba; border-bottom: 1px solid #cfccba; background: #f0eee2;
`;

/* ---------- toolbars ---------- */
const Toolbars = styled.div`flex: none; height: 53px; display: flex; flex-direction: column; border-bottom: 2px solid #8d8b7c;`;
const TbRow = styled.div`height: 26px; display: flex; flex: none;`;
const TbGroup = styled.div<{ $w: number; $ml?: number; $pad?: number }>`
  width: ${(q) => q.$w}px; margin-left: ${(q) => q.$ml || 0}px; height: 25px; flex: none;
  padding-left: ${(q) => q.$pad ?? 2}px; display: flex; align-items: center;
  border: 1px solid; border-color: #fff #aca899 #aca899 #fff;
`;
const Handle = styled.div`
  width: 3px; height: 19px; margin-right: 6.5px; flex: none;
  border-left: 1px solid #fff; border-right: 1px solid #aca899; background: #dedbc8;
`;
const Tool = styled.div`width: 22.6px; height: 23px; flex: none; display: flex; align-items: center; justify-content: center;`;
const TbSep = styled.div`width: 7.5px; height: 20px; flex: none; display: flex; justify-content: center;
  &::after { content: ""; width: 1px; height: 100%; background: #aca899; box-shadow: 1px 0 0 #fff; }
`;

const Group = ({ w, ml, pad = 2, items, off }: { w: number; ml?: number; pad?: number; items: string; off?: string }) => {
  const o = new Set((off || "").split(" "));
  return (
    <TbGroup $w={w} $ml={ml} $pad={pad}>
      <Handle />
      {items.split(" ").map((n, i) => n === "|" ? <TbSep key={i} /> : (
        <Tool key={i}><Icon n={n} off={o.has(n)} /></Tool>
      ))}
    </TbGroup>
  );
};

/* ---------- main ---------- */
const Main = styled.div`flex: 1; min-height: 0; display: flex;`;

const LeftPanel = styled.div`
  width: 179px; flex: none; display: flex; flex-direction: column; padding: 3px 0 7px 0;
  border-right: 1px solid #aca899; margin-right: 3px;
`;
const TabsTop = styled.div`display: flex; padding-left: 4px; height: 17px; flex: none;`;
const TabsBottom = styled.div`display: flex; padding-left: 4px; height: 20px; flex: none; align-items: flex-end;`;
const Tab = styled.div<{ $w: number; $active?: boolean }>`
  width: ${(q) => q.$w}px; flex: none; text-align: center; font-size: 11px;
  height: ${(q) => (q.$active ? 20 : 18)}px; line-height: ${(q) => (q.$active ? 15 : 18)}px;
  border: 1px solid; border-color: #fff #8d8b7c transparent #fff; border-radius: 2px 2px 0 0;
`;
const TreeBox = styled.div`
  flex: 1; margin: 2px 4px 0 6px; background: #fff; border: 2px solid #111;
  padding-top: 1px; outline: 1px solid #aca899; outline-offset: 1px; box-shadow: inset 1px 1px 0 #ccc;
`;
const TreeRow = styled.div`display: flex; height: 16px; align-items: center; padding-left: 14px;`;
const Connector = styled.div<{ $pos: "first" | "mid" | "last" }>`
  width: 15px; flex: none; display: flex; border-left: 1px dotted #999;
  height: ${(q) => (q.$pos === "mid" ? 16 : 8)}px;
  align-self: ${(q) => (q.$pos === "first" ? "flex-end" : "flex-start")};
  align-items: ${(q) => (q.$pos === "first" ? "flex-start" : q.$pos === "last" ? "flex-end" : "center")};
  &::after { content: ""; display: block; width: 100%; border-top: 1px dotted #999; }
`;
const TreeIcon = styled.div`width: 31px; flex: none; display: flex; justify-content: center;`;
const TreeLabel = styled.span<{ $bold?: boolean }>`font-size: 11px; font-weight: ${(q) => (q.$bold ? 700 : 400)};`;

const Center = styled.div`width: 1294px; flex: none; display: flex; flex-direction: column;`;
const InfoBar = styled.div`height: 34px; flex: none; display: flex; border-bottom: 2px solid #333;`;
const InfoCell = styled.div<{ $w: number }>`
  width: ${(q) => q.$w}px; flex: none; display: flex; flex-direction: column;
  border: 1px solid; border-color: #fff #8d8b7c transparent #fff; padding: 0 4px;
`;
const InfoLine = styled.div<{ $top?: boolean }>`
  height: 16px; display: flex; align-items: center; justify-content: flex-end; font-size: 11px;
  ${(q) => q.$top && "border-bottom: 1px solid #aca899;"}
`;
const InfoLabel = styled.span<{ $w: number }>`width: ${(q) => q.$w}px; text-align: right; margin-right: auto; white-space: nowrap;`;
const InfoTail = styled.div`flex: 1; border-top: 1px solid #fff;`;

const Work = styled.div`flex: 1; min-height: 0; display: flex;`;
const ClassicScroll = styled.div`
  width: 17px; flex: none; display: flex; flex-direction: column;
  background: conic-gradient(#fff 25%, #ece9d8 0 50%, #fff 0 75%, #ece9d8 0) 0 0 / 2px 2px;
`;
const ClassicBtn = styled.div`
  width: 17px; height: 16px; flex: none; background: #ece9d8; display: flex; align-items: center; justify-content: center;
  border: 1px solid; border-color: #fff #716f64 #716f64 #fff;
`;
const ClassicThumb = styled(ClassicBtn)`margin-top: 476px;`;
const ClassicRest = styled.div`flex: 1;`;
const Tri = styled.div`width: 0; height: 0; border-left: 4px solid transparent; border-right: 4px solid transparent;`;
const TriUp = styled(Tri)`border-bottom: 4px solid #000;`;
const TriDown = styled(Tri)`border-top: 4px solid #000;`;
const Canvas = styled.div`flex: 1; background: #fff; overflow: hidden;`;
const Drawing = styled.svg`display: block; width: 100%; height: 100%;`;

const HScroll = styled.div`
  height: 16px; flex: none; margin: 1px 0 3px; display: flex; align-items: center; padding-left: 1px; padding-right: 2px;
  background: linear-gradient(180deg, #f0eee0, #fdfdfa 30%, #f8f7f0);
`;
const XpBtn = styled.div`
  width: 16px; height: 15px; flex: none; border: 1px solid #fff; border-radius: 2px;
  background: linear-gradient(135deg, #e2ebfe, #b9cdf8); display: flex; align-items: center; justify-content: center;
  box-shadow: 0 0 0 .5px #a8bce8;
`;
const HThumb = styled.div`
  width: 364px; height: 15px; margin-left: 132px; border: 1px solid #e8efff; border-radius: 2px;
  background: linear-gradient(180deg, #c9d8fa, #bcd0fa); display: flex; align-items: center; justify-content: center;
  box-shadow: 0 0 0 .5px #a8bce8;
`;
const Grip = styled.div<{ $v?: boolean }>`
  width: 7px; height: 7px;
  background: repeating-linear-gradient(${(q) => (q.$v ? "180deg" : "90deg")}, #eef3ff 0 1px, #9fb5e5 1px 2px);
`;
const HFill = styled.div`flex: 1;`;

const RightScroll = styled.div`
  width: 16px; flex: none; display: flex; flex-direction: column; margin-top: 2px; margin-bottom: 20px;
  background: linear-gradient(90deg, #f2f0e4, #fdfdfa 40%, #f6f4ea);
`;
const VThumb = styled.div`
  width: 15px; height: 667px; margin: 206px 0 0 .5px; border: 1px solid #e8efff; border-radius: 2px;
  background: linear-gradient(90deg, #bcd0fa, #c9d8fa); display: flex; align-items: center; justify-content: center;
  box-shadow: 0 0 0 .5px #a8bce8;
`;
const VRest = styled.div`flex: 1;`;
const Chevron = styled.svg`display: block; width: 9px; height: 9px;`;

/* ---------- palettes ---------- */
const Palettes = styled.div`
  flex: 1; display: flex; flex-direction: column; align-items: flex-start; padding-left: 1px;
  border-left: 1px solid #fff;
`;
const Panel = styled.div<{ $wide?: boolean; $mt: number }>`
  width: ${(q) => (q.$wide ? 106 : 101)}px; margin-top: ${(q) => q.$mt}px; padding: 1px 2px 2px 2px; flex: none;
  border: 1px solid; border-color: #f8f6ec #7d7b6c #7d7b6c #f8f6ec;
`;
const PanelTitle = styled.div`
  height: 16px; background: #0a5ae0; color: #fff; font-weight: 700; font-size: 11.5px; letter-spacing: .4px;
  display: flex; align-items: center; justify-content: space-between; padding: 0 1px 0 2px;
  font-family: "Noto Sans", sans-serif;
`;
const PanelClose = styled.div`
  width: 13px; height: 12px; background: #ece9d8; color: #000; font-size: 10px; font-weight: 700; line-height: 10px;
  text-align: center; border: 1px solid; border-color: #fff #555 #555 #fff; font-family: ${FONT};
`;
const PalRow = styled.div<{ $h: number; $line?: boolean }>`
  height: ${(q) => q.$h}px; display: flex; align-items: center; padding-left: 2px; margin: 0 1px;
  ${(q) => q.$line && "border-top: 1px solid #aca899; box-shadow: inset 0 1px 0 #fff;"}
`;
const PalCell = styled.div<{ $on?: boolean }>`
  width: 23px; height: 22px; flex: none; display: flex; align-items: center; justify-content: center;
  ${(q) => q.$on && css`
    border: 1px solid; border-color: #aca899 #fff #fff #aca899;
    background: conic-gradient(#fff 25%, #ece9d8 0 50%, #fff 0 75%, #ece9d8 0) 0 0 / 2px 2px;
  `}
`;
const ToolsColumns = styled.div`display: flex; padding: 2px 0 0 2px;`;
const ToolsGrid = styled.div`display: grid; grid-template-columns: 23px 23px; grid-auto-rows: 22px;`;
const ToolsDivider = styled.div`width: 8px; display: flex; justify-content: center; &::after { content: ""; width: 1px; background: #aca899; box-shadow: 1px 0 0 #fff; }`;

const AttrTop = styled.div`display: flex; height: 69px; border-bottom: 1px solid #aca899; margin: 0 1px; padding-top: 3px;`;
const LineCol = styled.div`width: 44px; flex: none; display: flex; flex-direction: column; height: 64px;`;
const LineRow = styled.div<{ $on?: boolean }>`
  height: 9px; flex: none; display: flex; align-items: center; justify-content: center;
  ${(q) => q.$on && "border: 1px solid; border-color: #aca899 #fff #fff #aca899; background:#f8f6ec;"}
`;
const LineSvg = styled.svg`display: block; width: 36px; height: 5px;`;
const WidthCol = styled.div`flex: 1; border-left: 1px solid #aca899; padding-left: 3px; height: 60px; display: flex; flex-direction: column;`;
const WidthRow = styled.div<{ $on?: boolean }>`
  height: 15px; flex: none; display: flex; align-items: center; gap: 1px; font-size: 11.5px; padding-left: 2px; width: 42px;
  ${(q) => q.$on && "border: 1px solid; border-color: #aca899 #fff #fff #aca899; background:#f8f6ec; padding-left: 1px;"}
`;
const WidthBar = styled.div<{ $h: number }>`width: 15px; flex: none; background: #000; height: ${(q) => q.$h}px;`;
const Swatches = styled.div`display: grid; grid-template-columns: repeat(4, 19px); column-gap: 4px; row-gap: 4px; padding: 4px 0 4px 4px;`;
const Swatch = styled.div<{ $a: string; $b?: string; $on?: boolean }>`
  height: 7px;
  background: ${(q) => q.$b
    ? `conic-gradient(${q.$a} 25%, ${q.$b} 0 50%, ${q.$a} 0 75%, ${q.$b} 0) 0 0 / 2px 2px`
    : q.$a};
  ${(q) => q.$on && "outline: 1px solid #fff; outline-offset: 1px; box-shadow: 0 0 0 1px #aca899;"}
`;

/* ---------- status ---------- */
const StatusBar = styled.div`height: 20px; flex: none; display: flex; align-items: center; padding-left: 3px;`;
const StatusMsg = styled.div`width: 849px; flex: none; display: flex; align-items: center; gap: 1px; font-size: 10.6px;`;
const StatusCell = styled.div<{ $w: number }>`
  width: ${(q) => q.$w}px; height: 18px; flex: none; margin-right: 4px; display: flex; align-items: center; gap: 1px; font-size: 11.5px;
  border: 1px solid; border-color: #9d9b8c #fff #fff #9d9b8c; padding-left: 3px;
`;
const ThinLine = styled.div`width: 24px; height: 2px; background: #000; margin: 0 4px 0 2px;`;
const BlackBox = styled.div`width: 12px; height: 12px; background: #000; margin-left: 5px;`;

/* ---------- taskbar ---------- */
const Taskbar = styled.div`
  height: 34px; flex: none; display: flex; align-items: flex-end;
  background: linear-gradient(180deg, #3168d5 0, #4d93ea 2px, #2f72de 4px, #245edb 10px, #2663e0 26px, #1941a5 34px);
`;
const StartBtn = styled.div`
  width: 98px; height: 30px; flex: none; display: flex; align-items: center; gap: 5px; padding-left: 10px;
  border-radius: 0 8px 8px 0; color: #fff; font-size: 18px; font-weight: 700; font-style: italic;
  font-family: ${FONT}; text-shadow: 1px 1px 2px #1a4a1a;
  background: linear-gradient(180deg, #5aa55a 0, #3c8c3c 10%, #3f9a3f 50%, #2f7a2f 100%);
`;
const TaskGrip = styled.div<{ $ml: number; $mr: number }>`
  width: 3px; height: 24px; flex: none; margin: 0 ${(q) => q.$mr}px 3px ${(q) => q.$ml}px; align-self: flex-end;
  background: repeating-linear-gradient(180deg, #10308f 0 2px, transparent 2px 4px);
`;
const QuickLaunch = styled.div`display: flex; width: 437px; flex: none; height: 30px; align-items: center; margin-left: -2px;`;
const QlSlot = styled.div`width: 23.1px; flex: none; display: flex; justify-content: center;`;
const TaskButtons = styled.div`display: flex; gap: 2px; height: 30px; flex: none; align-items: center;`;
const TaskBtn = styled.div<{ $active?: boolean }>`
  width: 116px; height: 24px; flex: none; display: flex; align-items: center; gap: 4px; padding-left: 6px;
  color: #fff; font-size: 11px; white-space: nowrap; overflow: hidden; border-radius: 3px;
  background: ${(q) => (q.$active ? "#1e4fb5" : "linear-gradient(180deg, #4f8df0, #3a7ee8 60%, #3472e0)")};
  ${(q) => q.$active && "box-shadow: inset 1px 1px 2px #0a2a70;"}
`;
const Lang = styled.div`color: #fff; font-size: 11.5px; width: 20px; text-align: center; align-self: center; margin-top: 4px;`;
const Search = styled.div`
  width: 100px; height: 22px; flex: none; align-self: flex-end; margin: 0 0 4px 7px; background: #fff; color: #666;
  display: flex; align-items: center; justify-content: space-between; padding: 0 2px 0 3px; font-size: 11px; border: 1px solid #d6d3c3; white-space: nowrap;
`;
const SearchCaret = styled.div`
  width: 0; height: 0; align-self: center; margin: 4px 0 0 3px; flex: none;
  border-left: 3px solid transparent; border-right: 3px solid transparent; border-top: 3px solid #000;
`;
const Tray = styled.div`
  margin-left: auto; width: 147px; height: 30px; flex: none; display: flex; align-items: center;
  background: linear-gradient(180deg, #0f8be8, #18a0ee 40%, #1290e6); border-left: 1px solid #0a5ac0; color: #fff; font-size: 11.5px;
`;
const TrayBack = styled.div`
  width: 18px; height: 18px; margin: 0 1px 0 -9px; border-radius: 50%; background: #3a86f0; border: 1px solid #fff; flex: none;
  display: flex; align-items: center; justify-content: center;
`;
const TraySlot = styled.div`width: 18px; flex: none; display: flex; justify-content: center;`;
const Clock = styled.span`margin-left: 5px; letter-spacing: .5px; white-space: nowrap;`;

const chevron = (d: string) => (
  <Chevron viewBox="0 0 9 9"><path d={d} fill="none" stroke="#4d6185" strokeWidth="2" /></Chevron>
);
const smallChevron = (
  <Chevron viewBox="0 0 9 9"><path d="M6 1 2.5 4.5 6 8" fill="none" stroke="#fff" strokeWidth="2" /></Chevron>
);

const TREE = [
  { pos: "first" as const, icon: "tfolder", s: 16, text: "freie Elemente" },
  { pos: "mid" as const, icon: "kanten", s: 28, text: "Kanten" },
  { pos: "last" as const, icon: "hl2", s: 28, text: "HL", bold: true },
];

const LINES = ["", "8 3", "2 2", "6 2 2 2", "3 1 1 1", "10 2 1 1 1 2", "zig"];
const WIDTHS = [{ v: "0,18", h: 1, on: true }, { v: "0,25", h: 2 }, { v: "0,35", h: 3 }, { v: "0,50", h: 4 }];
const COLORS: [string, string?][] = [
  ["#000"], ["#b05050", "#904858"], ["#ff0000"], ["#ff8c00"],
  ["#990099"], ["#ff00ff"], ["#f0709c", "#f08098"], ["#ffbb00"],
  ["#0000ff"], ["#5870f0", "#8090ff"], ["#1090b0", "#10a060"], ["#888", "#aaa"],
  ["#a09a00", "#807800"], ["#088030", "#20b040"], ["#10c820"], ["#c8d060", "#e0e080"],
];

const PUNKTE = [["pxy", "pcc", "pcd", "pca"], ["pxx", "pmid", "ppt", "pxz"], ["pl1", "pl2", "pl3", "pl4"]];
const STIFTE = [1, 5, 9, 13].map((a) => [a, a + 1, a + 2, a + 3].map((v) => `s${v}`));
const WERK_L = ["arrow", "edit1", "ln", "edit2", "poly", "node1", "rc", "node2", "ci", "pocket", "ar", "dim", "el", "nut", "tt", "qd"];
const WERK_R = ["mv", "edoc", "mvc", "estar", "mv", "cubem", "split", "cubes", "para1", "", "para2", "", "", "", "attc", ""];
const AENDERN = [
  ["a1", "a2", "a3", "a4"],
  ["eq", "ud", "|", "fire"],
  ["t1", "t2", "t3", "t4"],
  ["f1", "f2", "f3", "f4"],
  ["hd", "dl", "dm", "dx"],
  ["hl", "dn", "dc", "da"],
  ["mv", "mvc", "mv", "mvr"],
  ["edoc", "estar", "cubem", "cubes"],
  ["edocr", "estarr", "cubemr", "cubesr"],
  ["cu1", "cu2", "cu3", "spi"],
];
const QL = ["ql1", "ie", "logo", "xl", "pl", "blue", "calc", "cd", "pal", "ynote", "mq", "bluebox", "stick", "proj", "printg", "ball", "arrows"];
const MENU = ["Datei", "Bearbeiten", "Symbole", "Zeichnen", "Ändern", "Struktur", "Ansicht", "Hilfen", "Einstellen", "Extras", "Fenster", "?"];

export default function App() {
  return (
    <Shell>
      <Global />
      <TitleBar>
        <AppLogo><Icon n="logo" /></AppLogo>
        <TitleText>DIG-CAD - [I:\...\abwicklung\wahrelaenge00c.dcd]</TitleText>
        <Quick>
          <QuickSquare><Icon n="win1" /></QuickSquare>
          <QuickGap $w={1} />
          <QuickBtn><Icon n="win2" /></QuickBtn>
          <QuickBtn><Icon n="win3" /></QuickBtn>
          <QuickGap $w={7} />
          {["t_mail", "t_cal", "t_task", "t_card", "t_jour", "t_note"].map((n) => <QuickBtn key={n}><Icon n={n} /></QuickBtn>)}
          <QuickGap $w={7} />
          {["o_w", "o_x", "o_p", "o_o", "o_a"].map((n) => <QuickBtn key={n}><Icon n={n} /></QuickBtn>)}
          <QuickGap $w={7} />
          <QuickBtn><Icon n="fp" /></QuickBtn>
        </Quick>
        <WinButtons>
          <WinBtn><svg width="12" height="12" viewBox="0 0 12 12"><rect x="2" y="8" width="6" height="2.5" fill="#fff" /></svg></WinBtn>
          <WinBtn><svg width="14" height="14" viewBox="0 0 14 14"><path d="M5 4V2h7v6h-2M2 5h7v7H2z" fill="none" stroke="#fff" strokeWidth="1.5" /></svg></WinBtn>
          <WinBtn $close><svg width="14" height="14" viewBox="0 0 14 14"><path d="M2 2l10 10M12 2 2 12" stroke="#fff" strokeWidth="2.2" /></svg></WinBtn>
        </WinButtons>
      </TitleBar>

      <MenuBar>
        <MenuIcon><Icon n="doc" /></MenuIcon>
        {MENU.map((m) => <MenuItem key={m}>{m}</MenuItem>)}
        <MdiBtns>
          <MdiBtn><svg width="10" height="10" viewBox="0 0 10 10"><rect x="1" y="7" width="6" height="2" fill="#666" /></svg></MdiBtn>
          <MdiBtn><svg width="10" height="10" viewBox="0 0 10 10"><path d="M3 2V.5h6v5H8M.5 3h6v6h-6z" fill="none" stroke="#666" /></svg></MdiBtn>
          <MdiBtn><svg width="10" height="10" viewBox="0 0 10 10"><path d="M1 1l8 8M9 1 1 9" stroke="#666" strokeWidth="1.8" /></svg></MdiBtn>
        </MdiBtns>
      </MenuBar>

      <Toolbars>
        <TbRow>
          <Group w={313} pad={1} items="new open openr | save savem saveall | book ydoc mail | print plot | print2" />
          <Group w={255} ml={9} pad={1} off="cut copy paste pastem undo redo cancel check" items="cut copy paste pastem | undo redo cancel check | pin1 pin2" />
          <Group w={186} ml={9} pad={1} items="snap axes grid rays slash | wins | bug" />
          <Group w={104} ml={137} pad={1} off="h1 h2 h3 h4" items="h1 h2 h3 h4" />
          <Group w={465} ml={14} pad={0} items="w1 w2 w3 w4 | w5 w6 w7 w8 w9 w10 w11 w12 w13 | gear tools bar | wc wx wy" />
          <Group w={83} ml={25} pad={1} items="helpq help bookp" />
        </TbRow>
        <TbRow>
          <Group w={284} pad={0} items="pg1 pg2 pg3 | ar1 ar2 | st hs vs lst | li1 li2" />
          <Group w={133} ml={38} pad={0} off="dsave x" items="dopen dsave dsel x | scale" />
          <Group w={427} ml={131} pad={1} off="zoomd" items="pen penx | fit zoomd pan one mag magb | z1 z2 z3 z4 | z5 z6 z7 z8 | zw" />
          <Group w={103} ml={14} pad={0} items="p1 brush attr attc" />
          <Group w={305} ml={57} pad={0} off="nodesg" items="fe fe2 | cb3 cbh cbo cbt cbw cbb | attT | nodes nodesg nodesg" />
        </TbRow>
      </Toolbars>

      <Main>
        <LeftPanel>
          <TabsTop>
            <Tab $w={82}>Blöcke</Tab>
            <Tab $w={88}>Symbole</Tab>
          </TabsTop>
          <TabsBottom>
            <Tab $w={85}>Ebenen</Tab>
            <Tab $w={89} $active>Bauteile</Tab>
          </TabsBottom>
          <TreeBox>
            {TREE.map((n) => (
              <TreeRow key={n.text}>
                <Connector $pos={n.pos} />
                <TreeIcon><Icon n={n.icon} s={n.s} /></TreeIcon>
                <TreeLabel $bold={n.bold}>{n.text}</TreeLabel>
              </TreeRow>
            ))}
          </TreeBox>
        </LeftPanel>

        <Center>
          <InfoBar>
            <InfoCell $w={143.5}>
              <InfoLine $top><InfoLabel $w={63}>Absolut X:</InfoLabel>-519,82mm</InfoLine>
              <InfoLine><InfoLabel $w={63}>Absolut Y:</InfoLabel>25,47mm</InfoLine>
            </InfoCell>
            <InfoCell $w={144}>
              <InfoLine $top><InfoLabel $w={63}>Rel. Länge:</InfoLabel>520,44mm</InfoLine>
              <InfoLine><InfoLabel $w={63}>Rel. Winkel:</InfoLabel>177,20°</InfoLine>
            </InfoCell>
            <InfoCell $w={144}><InfoLine $top /><InfoLine /></InfoCell>
            <InfoCell $w={144}><InfoLine $top /><InfoLine /></InfoCell>
            <InfoTail />
          </InfoBar>
          <Work>
            <ClassicScroll>
              <ClassicBtn><TriUp /></ClassicBtn>
              <ClassicThumb />
              <ClassicRest />
              <ClassicBtn><TriDown /></ClassicBtn>
            </ClassicScroll>
            <Canvas>
              <Drawing viewBox="199 134 1277 992" shapeRendering="crispEdges">
                <g fill="none" stroke="#c0c0c0" strokeWidth="1">
                  <ellipse cx="881.5" cy="622" rx="482.5" ry="467" />
                  <path d="M360 622H1293" />
                  <path d="M596 176Q625 192 640 210Q648 220 652 227L880 622" />
                  <path d="M493 309 513 319 535 335M513 319 530 333 880 622" />
                  <path d="M389 458Q410 458 429 461L467 473 487 482 538 499 880 622" />
                  <path d="M429 461 450 466 487 481" />
                  <path d="M409 786 429 784 880 622" />
                  <path d="M429 784 455 775 497 756" />
                  <path d="M475 941Q500 933 522 918L880 622" />
                  <path d="M623 1050Q640 1036 648 1026L668 990 880 622" />
                </g>
              </Drawing>
            </Canvas>
          </Work>
          <HScroll>
            <XpBtn>{chevron("M6 1 2.5 4.5 6 8")}</XpBtn>
            <HThumb><Grip /></HThumb>
            <HFill />
            <XpBtn>{chevron("M3 1 6.5 4.5 3 8")}</XpBtn>
          </HScroll>
        </Center>

        <RightScroll>
          <XpBtn>{chevron("M1 6 4.5 2.5 8 6")}</XpBtn>
          <VThumb><Grip $v /></VThumb>
          <VRest />
          <XpBtn>{chevron("M1 3 4.5 6.5 8 3")}</XpBtn>
        </RightScroll>

        <Palettes>
          <Panel $mt={0}>
            <PanelTitle>Punkte<PanelClose>×</PanelClose></PanelTitle>
            {PUNKTE.map((row, i) => (
              <PalRow key={i} $h={27} $line={i > 0}>
                {row.map((n) => <PalCell key={n}><Icon n={n} off /></PalCell>)}
              </PalRow>
            ))}
          </Panel>
          <Panel $wide $mt={5}>
            <PanelTitle>Werkzeuge<PanelClose>×</PanelClose></PanelTitle>
            <ToolsColumns>
              <ToolsGrid>
                {WERK_L.map((n, i) => <PalCell key={i} $on={n === "node1"}><Icon n={n} /></PalCell>)}
              </ToolsGrid>
              <ToolsDivider />
              <ToolsGrid>
                {WERK_R.map((n, i) => <PalCell key={i} $on={i === 1}>{n && <Icon n={n} />}</PalCell>)}
              </ToolsGrid>
            </ToolsColumns>
          </Panel>
          <Panel $mt={2}>
            <PanelTitle>Attribute<PanelClose>×</PanelClose></PanelTitle>
            <AttrTop>
              <LineCol>
                {LINES.map((d, i) => (
                  <LineRow key={i} $on={i === 0}>
                    <LineSvg viewBox="0 0 36 5">
                      {d === "zig"
                        ? <path d="M0 3q2-3 4 0t4 0 4 0 4 0 4 0 4 0 4 0 4 0 4 0" fill="none" stroke="#000" strokeWidth="1.2" />
                        : <path d="M0 2.5H36" stroke="#000" strokeWidth={2} strokeDasharray={d || undefined} />}
                    </LineSvg>
                  </LineRow>
                ))}
              </LineCol>
              <WidthCol>
                {WIDTHS.map((w) => (
                  <WidthRow key={w.v} $on={w.on}>
                    <WidthBar $h={w.h} />{w.v}
                  </WidthRow>
                ))}
              </WidthCol>
            </AttrTop>
            <Swatches>
              {COLORS.map((col, i) => <Swatch key={i} $a={col[0]} $b={col[1]} $on={i === 0} />)}
            </Swatches>
          </Panel>
          <Panel $mt={2}>
            <PanelTitle>Stifte<PanelClose>×</PanelClose></PanelTitle>
            {STIFTE.map((row, i) => (
              <PalRow key={i} $h={28} $line={i > 0}>
                {row.map((n) => <PalCell key={n}><Icon n={n} off /></PalCell>)}
              </PalRow>
            ))}
          </Panel>
          <Panel $mt={0}>
            <PanelTitle>Ändern<PanelClose>×</PanelClose></PanelTitle>
            {AENDERN.map((row, i) => (
              <PalRow key={i} $h={28} $line={i > 0}>
                {row.map((n, j) => n === "|"
                  ? <PalCell key={j}><TbSep /></PalCell>
                  : <PalCell key={j} $on={i === 7 && j === 0}><Icon n={n} off={n === "dx" || n === "da"} /></PalCell>)}
              </PalRow>
            ))}
          </Panel>
        </Palettes>
      </Main>

      <StatusBar>
        <StatusMsg><Icon n="edoc" s={17} />Element in aktive Ebene verlagern: Element auswählen</StatusMsg>
        <StatusCell $w={209}><Icon n="docbs" s={17} />HL [1:1]</StatusCell>
        <StatusCell $w={209}><Icon n="hl2" s={18} />HL</StatusCell>
        <StatusCell $w={71}><ThinLine />0,18<BlackBox /></StatusCell>
        <StatusCell $w={45}><Icon n="hd" s={15} off /><Icon n="print2" s={15} off /></StatusCell>
      </StatusBar>

      <Taskbar>
        <StartBtn><Icon n="flag" s={20} />Start</StartBtn>
        <TaskGrip $ml={12} $mr={6} />
        <QuickLaunch>
          {QL.map((n) => <QlSlot key={n}><Icon n={n} s={18} /></QlSlot>)}
        </QuickLaunch>
        <TaskGrip $ml={0} $mr={6} />
        <TaskButtons>
          <TaskBtn><Icon n="ie" s={18} />Verbindunge...</TaskBtn>
          <TaskBtn><Icon n="fp" s={18} />Microsoft Fr...</TaskBtn>
          <TaskBtn $active><Icon n="logo" s={18} />DIG-CAD - [I...</TaskBtn>
          <TaskBtn><Icon n="folder" s={18} />abwicklung</TaskBtn>
          <TaskBtn><Icon n="folder" s={18} />digcad</TaskBtn>
          <TaskBtn><Icon n="pal" s={18} />Paint Shop Pro</TaskBtn>
        </TaskButtons>
        <TaskGrip $ml={9} $mr={4} />
        <Lang>DE</Lang>
        <TaskGrip $ml={4} $mr={0} />
        <Search>Suchbegriff ei...<Icon n="G" s={16} /></Search>
        <SearchCaret />
        <Tray>
          <TrayBack>{smallChevron}</TrayBack>
          {["tr1", "tr2", "tr3", "tr4", "stop"].map((n) => <TraySlot key={n}><Icon n={n} s={17} /></TraySlot>)}
          <Clock>07:19</Clock>
        </Tray>
      </Taskbar>
    </Shell>
  );
}
